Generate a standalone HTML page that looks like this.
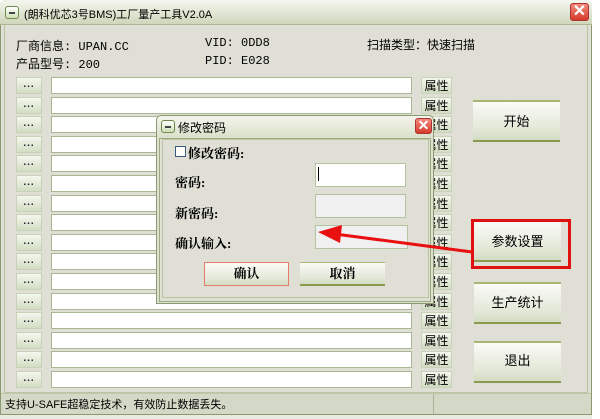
<!DOCTYPE html><html><head><meta charset="utf-8"><style>
*{margin:0;padding:0;box-sizing:border-box}
body{width:600px;height:419px;overflow:hidden;background:#fff;font-family:"Liberation Sans","Noto Sans CJK SC",sans-serif;font-size:12px;color:#000;position:relative}
.a{position:absolute}
.win{left:0;top:0;width:592px;height:419px;background:#dfdfd5;border:1px solid #8a9a70;border-radius:6px 6px 0 0}
.tb{left:0;top:0;width:592px;height:25px;background:linear-gradient(#f4f6ee,#dfe4d0 60%,#cfd6ba);border-radius:6px 6px 0 0;border-bottom:1px solid #a9b68e}
.sysic{width:14px;height:13px;border:1px solid #6f8a50;border-radius:3px;background:linear-gradient(#fff,#cfe0b6)}
.sysic:after{content:"";position:absolute;left:3px;top:5px;width:6px;height:2px;background:#444}
.close{width:19px;height:18px;border:1px solid #a33;border-radius:3px;background:linear-gradient(#f38a7c,#d53a2a);color:#fff;font-size:16px;line-height:15px;text-align:center;font-weight:bold}
.dot{width:26px;height:17px;background:linear-gradient(#f4f7ee,#d2ddc3);border:1px solid #c8d2b8;font-size:10px;font-weight:bold;letter-spacing:1px;text-align:center;line-height:14px;color:#223}
.in{width:361px;height:17px;background:#fff;border:1px solid #a8b894}
.pr{width:31px;height:17px;background:linear-gradient(#f4f7ee,#d2ddc3);border:1px solid #c8d2b8;font-size:12px;text-align:center;line-height:16px}
.btn{width:87px;height:42px;background:linear-gradient(#fafbf6,#e3e8d8 70%,#d4dcc3);border-top:2px solid #a9b673;border-bottom:2px solid #8c9a50;text-align:center;font-size:13px}
.mono{font-family:"Liberation Mono","Noto Sans CJK SC",monospace;font-size:12px}
.dlg{left:156px;top:115px;width:278px;height:189px;background:#dfdfd5;border:1px solid #8a9a70;border-radius:5px 5px 0 0}
.b{font-weight:bold;font-family:"Liberation Serif","Noto Serif CJK SC",serif;font-size:13px}
.dbtn{width:85px;height:24px;background:linear-gradient(#fafbf6,#e3e8d8 70%,#d4dcc3);text-align:center;line-height:22px}
</style></head><body>
<div class="a win"></div>
<div class="a tb"></div>
<div class="a sysic" style="left:5px;top:6px"></div>
<div class="a" style="left:24px;top:6px;font-size:11px">(朗科优芯3号BMS)工厂量产工具V2.0A</div>
<div class="a close" style="left:570px;top:3px">✕</div>
<div class="a" style="left:4px;top:25px;width:584px;height:368px;border:1px solid #b9c4a0;border-top:none"></div>
<div class="a mono" style="left:16px;top:37px">厂商信息: UPAN.CC</div>
<div class="a mono" style="left:16px;top:55px">产品型号: 200</div>
<div class="a mono" style="left:205px;top:36px">VID: 0DD8</div>
<div class="a mono" style="left:205px;top:54px">PID: E028</div>
<div class="a" style="left:367px;top:36px">扫描类型：快速扫描</div>
<div id="rows"></div>
<script>
var h='';for(var i=0;i<16;i++){var y=Math.round(77+i*19.6);
h+='<div class="a dot" style="left:16px;top:'+y+'px">...</div><div class="a in" style="left:51px;top:'+y+'px"></div><div class="a pr" style="left:421px;top:'+y+'px">属性</div>';}
document.getElementById('rows').outerHTML=h;
</script>
<div class="a btn" style="left:473px;top:100px;line-height:40px">开始</div>
<div class="a btn" style="left:474px;top:220px;line-height:40px">参数设置</div>
<div class="a btn" style="left:474px;top:282px;line-height:38px">生产统计</div>
<div class="a btn" style="left:474px;top:341px;line-height:36px">退出</div>
<div class="a" style="left:471px;top:219px;width:100px;height:50px;border:3px solid #e01010"></div>
<div class="a" style="left:1px;top:393px;width:590px;height:21px;background:#d4d8c6;border-top:1px solid #bfc6ad"></div>
<div class="a" style="left:433px;top:394px;width:1px;height:20px;background:#aab395"></div>
<div class="a" style="left:5px;top:396px;font-size:11px">支持U-SAFE超稳定技术，有效防止数据丢失。</div>
<div class="a" style="left:0;top:414px;width:592px;height:5px;background:#e8ebe0;border-top:1px solid #8a9a70"></div>
<div class="a dlg"></div>
<div class="a" style="left:157px;top:116px;width:276px;height:21px;background:linear-gradient(#f4f6ee,#dbe1cb);border-radius:5px 5px 0 0"></div>
<div class="a sysic" style="left:161px;top:120px"></div>
<div class="a" style="left:178px;top:119px">修改密码</div>
<div class="a close" style="left:415px;top:118px;width:17px;height:16px;font-size:14px;line-height:13px">✕</div>
<div class="a" style="left:159px;top:138px;width:272px;height:164px;border:1px solid #9aab7c"></div>
<div class="a" style="left:162px;top:139px;width:267px;height:159px;border:1px solid #b9c4a0"></div>
<div class="a" style="left:175px;top:146px;width:11px;height:11px;border:1px solid #3a5a80;background:#fff"></div>
<div class="a b" style="left:188px;top:143px">修改密码:</div>
<div class="a b" style="left:175px;top:172px">密码:</div>
<div class="a b" style="left:175px;top:203px">新密码:</div>
<div class="a b" style="left:175px;top:233px">确认输入:</div>
<div class="a" style="left:315px;top:163px;width:91px;height:24px;background:#fff;border:1px solid #b5c4a0"></div>
<div class="a" style="left:318px;top:167px;width:1px;height:14px;background:#000"></div>
<div class="a" style="left:315px;top:194px;width:91px;height:24px;background:#f0f0f0;border:1px solid #b5c4a0"></div>
<div class="a" style="left:315px;top:225px;width:93px;height:24px;background:#f0f0f0;border:1px solid #b5c4a0"></div>
<div class="a dbtn b" style="left:204px;top:262px;border:1px solid #e87c6c">确认</div>
<div class="a dbtn b" style="left:300px;top:262px;border-top:1px solid #a9b673;border-bottom:2px solid #8c9a50">取消</div>
<svg class="a" style="left:0;top:0" width="600" height="419"><line x1="472" y1="252" x2="335" y2="234" stroke="#e81010" stroke-width="3"/><polygon points="318,232 342,225 340,243" fill="#e81010"/></svg>
</body></html>
